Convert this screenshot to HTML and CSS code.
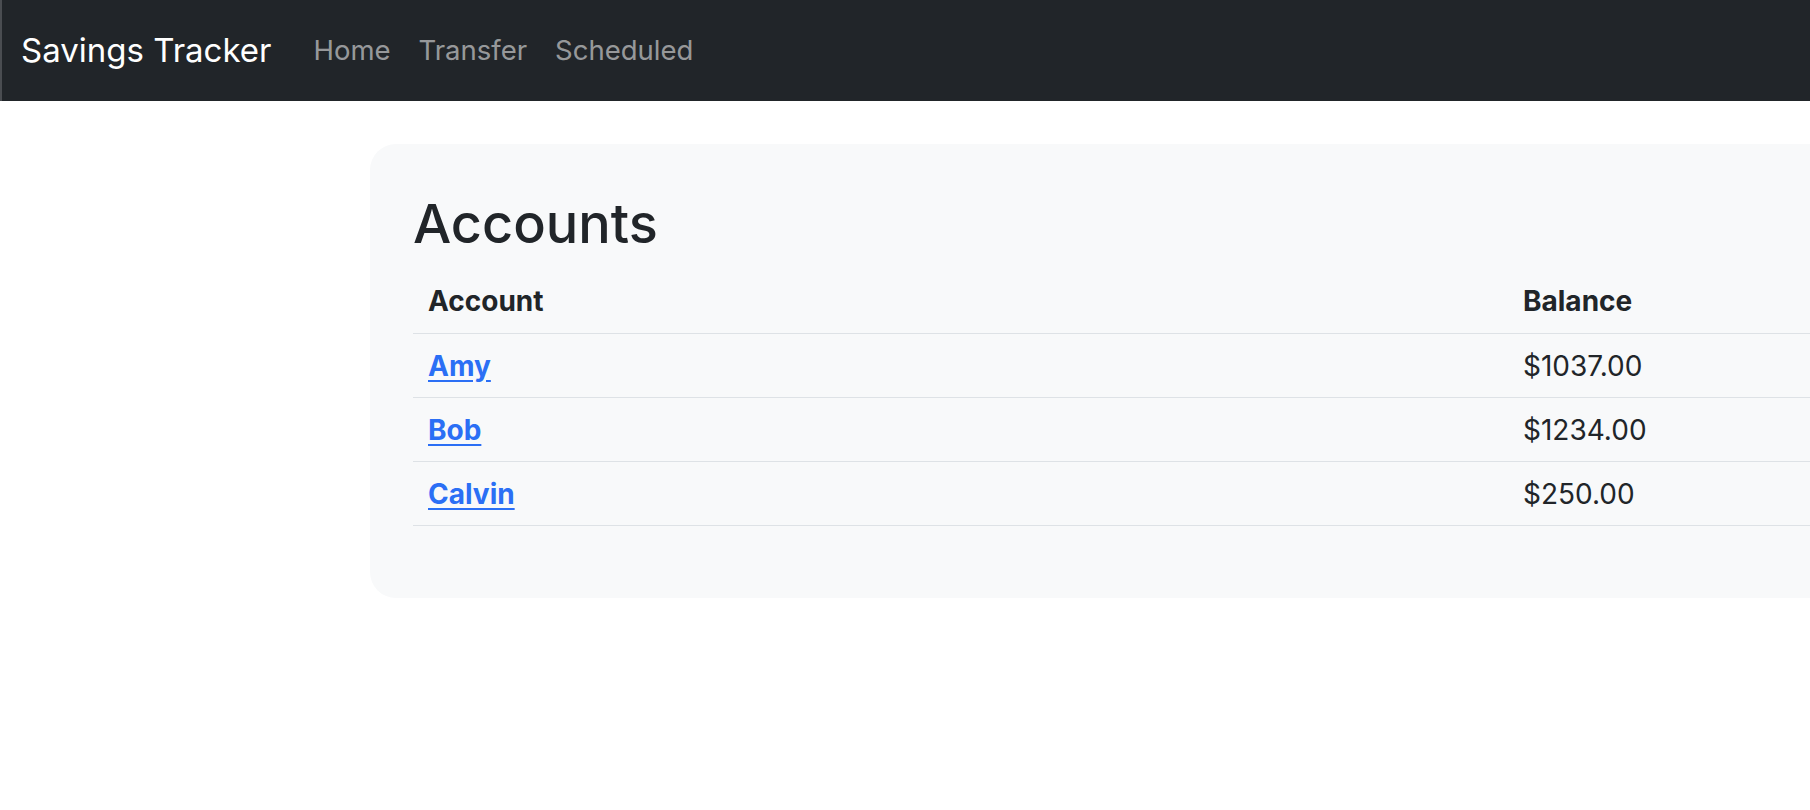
FILE: index.html
```html
<!DOCTYPE html>
<html lang="en">
<head>
<meta charset="utf-8">
<title>Savings Tracker</title>
<link rel="stylesheet" href="styles.css">
</head>
<body>
<nav class="navbar">
  <a class="brand" href="#">Savings Tracker</a>
  <ul class="nav-links">
    <li><a href="#">Home</a></li>
    <li><a href="#">Transfer</a></li>
    <li><a href="#">Scheduled</a></li>
  </ul>
</nav>
<main class="main">
  <section class="card">
    <h1 class="title">Accounts</h1>
    <table class="accounts">
      <colgroup><col class="col-name"><col class="col-balance"></colgroup>
      <thead>
        <tr><th>Account</th><th>Balance</th></tr>
      </thead>
      <tbody>
        <tr><td><a href="#">Amy</a></td><td>$1037.00</td></tr>
        <tr><td><a href="#">Bob</a></td><td>$1234.00</td></tr>
        <tr><td><a href="#">Calvin</a></td><td>$250.00</td></tr>
      </tbody>
    </table>
  </section>
</main>
</body>
</html>
```

FILE: styles.css
```css
* { box-sizing: border-box; }
html, body { margin: 0; padding: 0; }
body {
  font-family: Inter, "Liberation Sans", sans-serif;
  color: #212529;
  background: #fff;
  overflow-x: hidden;
}
.navbar {
  height: 101px;
  background: #212529;
  border-left: 2px solid #4a4d51;
  display: flex;
  align-items: center;
  padding-left: 19px;
}
.brand {
  color: #fff;
  text-decoration: none;
  font-size: 33px;
  line-height: 1.2;
  margin-right: 28px;
}
.nav-links {
  list-style: none;
  margin: 0;
  padding: 0;
  display: flex;
}
.nav-links a {
  display: block;
  padding: 0 14px;
  color: rgba(255,255,255,0.55);
  text-decoration: none;
  font-size: 27.5px;
  line-height: 1.2;
}
.main {
  overflow: hidden;
  padding: 43px 0 0 370px;
}
.card {
  width: 2305px;
  background: #f8f9fa;
  border-radius: 26px;
  padding: 42px 42px 42px 43px;
}
.title {
  margin: 3px 0 10px;
  font-size: 54px;
  font-weight: 500;
  line-height: 70px;
}
.accounts {
  width: 2221px;
  table-layout: fixed;
  border-collapse: collapse;
  margin-bottom: 30px;
  font-size: 28px;
}
.col-name { width: 1095px; }
.accounts th, .accounts td {
  text-align: left;
  padding: 15px 15px 13px;
  height: 64px;
  line-height: 35px;
  border-bottom: 1px solid #dee2e6;
}
.accounts th { font-weight: 700; }
.accounts td { font-weight: 400; }
.accounts a {
  color: #2b6ff5;
  font-weight: 700;
  text-decoration: underline;
  text-underline-offset: 4px;
}
```
